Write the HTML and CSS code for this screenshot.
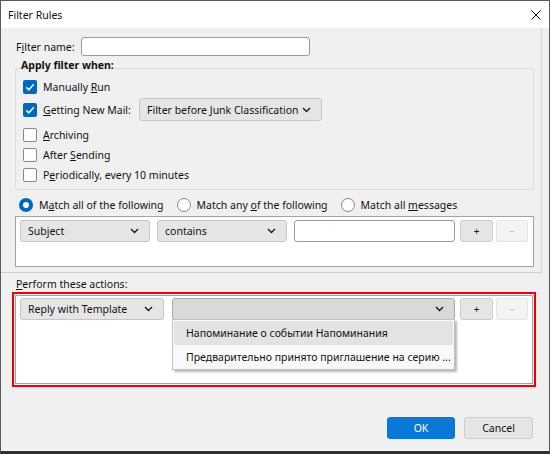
FILE: index.html
```html
<!DOCTYPE html>
<html>
<head>
<meta charset="utf-8">
<link rel="stylesheet" href="styles.css">
</head>
<body>
<div class="window">
  <div class="titlebar">
    <span class="title">Filter Rules</span>
    <svg class="close" width="10" height="10" viewBox="0 0 10 10"><path d="M0.5 0.5 L9.5 9.5 M9.5 0.5 L0.5 9.5" stroke="#111" stroke-width="1" fill="none"/></svg>
  </div>
  <div class="content">
    <div class="upper">
      <div class="name-row">
        <label class="name-label">F<u>i</u>lter name:</label>
        <div class="textbox name-input"></div>
      </div>
      <div class="legend">Apply filter when:</div>
      <div class="group">
        <div class="cb-row">
          <span class="cb checked"><svg width="14" height="14" viewBox="0 0 14 14"><path d="M3.2 7.3 L5.8 9.8 L10.8 4.3" fill="none" stroke="#fff" stroke-width="1.5"/></svg></span>
          <span>Manually <u>R</u>un</span>
        </div>
        <div class="cb-row tall">
          <span class="cb checked"><svg width="14" height="14" viewBox="0 0 14 14"><path d="M3.2 7.3 L5.8 9.8 L10.8 4.3" fill="none" stroke="#fff" stroke-width="1.5"/></svg></span>
          <span class="mail-label"><u>G</u>etting New Mail:</span>
          <div class="select junk">
            <span>Filter before Junk Classification</span>
            <svg width="9" height="6" viewBox="0 0 9 6"><path d="M1 1 L4.5 4.5 L8 1" fill="none" stroke="#1a1a1a" stroke-width="1.4"/></svg>
          </div>
        </div>
        <div class="cb-row">
          <span class="cb"></span>
          <span><u>A</u>rchiving</span>
        </div>
        <div class="cb-row">
          <span class="cb"></span>
          <span>After <u>S</u>ending</span>
        </div>
        <div class="cb-row">
          <span class="cb"></span>
          <span>P<u>e</u>riodically, every 10 minutes</span>
        </div>
      </div>
      <div class="radio-row">
        <div class="radio-item"><span class="radio checked"></span><span>M<u>a</u>tch all of the following</span></div>
        <div class="radio-item"><span class="radio"></span><span>Match any <u>o</u>f the following</span></div>
        <div class="radio-item"><span class="radio"></span><span>Match all <u>m</u>essages</span></div>
      </div>
      <div class="listbox rules">
        <div class="rule-row">
          <div class="select w-subject">
            <span>Subject</span>
            <svg width="9" height="6" viewBox="0 0 9 6"><path d="M1 1 L4.5 4.5 L8 1" fill="none" stroke="#1a1a1a" stroke-width="1.4"/></svg>
          </div>
          <div class="select w-contains">
            <span>contains</span>
            <svg width="9" height="6" viewBox="0 0 9 6"><path d="M1 1 L4.5 4.5 L8 1" fill="none" stroke="#1a1a1a" stroke-width="1.4"/></svg>
          </div>
          <div class="textbox value-input"></div>
          <div class="btn-small plus">+</div>
          <div class="btn-small minus disabled">−</div>
        </div>
      </div>
    </div>
    <div class="lower">
      <div class="section-label"><u>P</u>erform these actions:</div>
      <div class="highlight">
        <div class="listbox actions">
          <div class="rule-row action-row">
            <div class="select w-reply">
              <span>Reply with Template</span>
              <svg width="9" height="6" viewBox="0 0 9 6"><path d="M1 1 L4.5 4.5 L8 1" fill="none" stroke="#1a1a1a" stroke-width="1.4"/></svg>
            </div>
            <div class="select open w-template">
              <span></span>
              <svg width="9" height="6" viewBox="0 0 9 6"><path d="M1 1 L4.5 4.5 L8 1" fill="none" stroke="#1a1a1a" stroke-width="1.4"/></svg>
              <div class="popup">
                <div class="popup-item hover">Напоминание о событии Напоминания</div>
                <div class="popup-item">Предварительно принято приглашение на серию ...</div>
              </div>
            </div>
            <div class="btn-small plus">+</div>
            <div class="btn-small minus disabled">−</div>
          </div>
        </div>
      </div>
      <div class="buttons">
        <div class="btn primary">OK</div>
        <div class="btn">Cancel</div>
      </div>
    </div>
  </div>
</div>
</body>
</html>
```

FILE: styles.css
```css
* { box-sizing: border-box; }
html, body { margin: 0; padding: 0; background: #2a2a2a; }
body {
  font-family: "Noto Sans", "Open Sans", sans-serif;
  font-size: 10.5px;
  color: #111;
}
u { text-decoration: underline; text-underline-offset: 1px; }

.window {
  width: 550px;
  height: 454px;
  border: 1px solid #5a5a5a;
  border-bottom: 3px solid #303030;
  background: #f0f0f0;
  display: flex;
  flex-direction: column;
}

.titlebar {
  height: 27px;
  flex: none;
  background: #ffffff;
  display: flex;
  align-items: center;
  padding: 0 8px 0 7px;
}
.title { font-size: 10.5px; color: #111; }
.close { margin-left: auto; }

.content {
  flex: 1;
  display: flex;
  flex-direction: column;
  border-bottom: 1px solid #fbfbfb;
}

.upper {
  height: 245px;
  flex: none;
  width: 541px;
  border-right: 1px solid #d6d6d6;
  border-bottom: 1px solid #cfcfcf;
  padding-top: 9px;
}

.name-row {
  display: flex;
  align-items: center;
  height: 19px;
  padding-left: 15px;
}
.name-label { width: 65px; }
.textbox {
  background: #fff;
  border: 1px solid #9b9b9b;
  border-radius: 3px;
}
.name-input { width: 229px; height: 19px; }

.legend {
  margin: 3px 0 0 20px;
  height: 12px;
  line-height: 12px;
  font-weight: bold;
  position: relative;
}

.group {
  margin: -3px 0 0 14px;
  width: 519px;
  border: 1px solid #dcdcdc;
  border-radius: 3px;
  padding: 8px 0 4px 7px;
}

.cb-row {
  display: flex;
  align-items: center;
  height: 20px;
  gap: 6px;
}
.cb-row.tall { height: 23px; margin: 1px 0 4px; }
.cb {
  width: 14px;
  height: 14px;
  border: 1px solid #8a8a8a;
  border-radius: 2px;
  background: #fdfdfd;
  flex: none;
  display: flex;
}
.cb.checked { background: #0067c0; border: none; }
.mail-label { width: 90px; flex: none; }

.select {
  display: flex;
  align-items: center;
  justify-content: space-between;
  height: 22px;
  border: 1px solid #c6c6c6;
  border-radius: 3px;
  background: #e5e5e5;
  padding: 0 10px 0 7px;
  flex: none;
  white-space: nowrap;
}
.junk { width: 183px; height: 23px; }

.radio-row {
  display: flex;
  align-items: center;
  height: 20px;
  margin-top: 5px;
  padding-left: 18px;
  gap: 13px;
}
.radio-item { display: flex; align-items: center; gap: 6px; }
.radio {
  width: 14px;
  height: 14px;
  border-radius: 50%;
  border: 1px solid #8a8a8a;
  background: #fdfdfd;
  flex: none;
  display: flex;
  align-items: center;
  justify-content: center;
}
.radio.checked { background: #0067c0; border: none; }
.radio.checked::after {
  content: "";
  width: 6px;
  height: 6px;
  border-radius: 50%;
  background: #fff;
}

.listbox {
  background: #fff;
  border: 1px solid #a3a3a3;
}
.rules {
  margin: 1px 0 0 14px;
  width: 519px;
  height: 51px;
  padding: 3px 4px 0 4px;
}
.rule-row { display: flex; align-items: center; }
.w-subject { width: 130px; }
.w-contains { width: 130px; margin-left: 7px; }
.value-input { width: 161px; height: 22px; margin-left: 7px; }
.btn-small {
  height: 22px;
  border: 1px solid #cccccc;
  border-radius: 3px;
  background: #e5e5e5;
  display: flex;
  align-items: center;
  justify-content: center;
  font-size: 10px;
  flex: none;
}
.plus { width: 33px; margin-left: 5px; }
.minus { width: 32px; margin-left: 3px; }
.btn-small.disabled {
  background: #f4f4f4;
  border-color: #e4e4e4;
  color: #b5b5b5;
}

.lower {
  flex: 1;
  display: flex;
  flex-direction: column;
}
.section-label {
  margin: 3px 0 0 15px;
  height: 16px;
  line-height: 16px;
}
.highlight {
  margin-left: 11px;
  width: 524px;
  height: 95px;
  border: 2px solid #e8000b;
  padding: 1px;
}
.actions {
  width: 518px;
  height: 89px;
  padding: 2px 4px 0 4px;
}
.w-reply { width: 144px; }
.w-template {
  width: 283px;
  margin-left: 8px;
  position: relative;
  background: #d9d9d9;
  border-color: #a9a9a9;
}
.popup {
  position: absolute;
  left: -1px;
  top: 20px;
  width: 283px;
  height: 51px;
  background: #f9f9f9;
  border: 1px solid #c2c2c2;
  padding: 1px;
  box-shadow: 2px 2px 2px rgba(0, 0, 0, 0.28);
  z-index: 5;
}
.popup-item {
  height: 24px;
  line-height: 24px;
  padding-left: 12px;
  white-space: nowrap;
  overflow: hidden;
}
.popup-item.hover { background: #e3e3e3; }

.buttons {
  display: flex;
  justify-content: flex-end;
  gap: 9px;
  margin-top: 30px;
  padding-right: 16px;
}
.btn {
  width: 69px;
  height: 22px;
  border: 1px solid #cbcbcb;
  border-radius: 3px;
  background: #e5e5e5;
  display: flex;
  align-items: center;
  justify-content: center;
}
.btn.primary {
  width: 68px;
  background: #0b78d7;
  border-color: #0b78d7;
  color: #fff;
}
```
